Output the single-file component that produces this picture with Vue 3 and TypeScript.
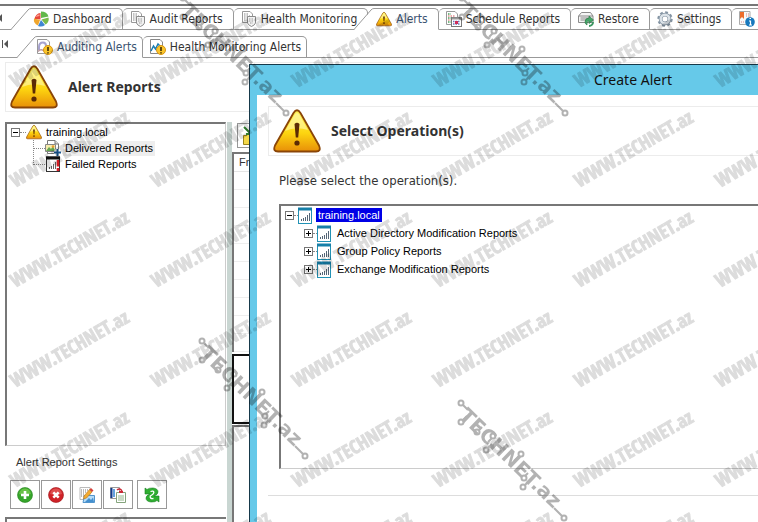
<script setup lang="ts">
interface Tab {
  label: string
  icon: string
  active?: boolean
}

interface TreeItem {
  label: string
  icon: string
  selected?: boolean
}

interface Point {
  x: number
  y: number
}

const mainTabs: Tab[] = [
  { label: 'Dashboard', icon: 'pie' },
  { label: 'Audit Reports', icon: 'audit' },
  { label: 'Health Monitoring', icon: 'audit' },
  { label: 'Alerts', icon: 'warning', active: true },
  { label: 'Schedule Reports', icon: 'schedule' },
  { label: 'Restore', icon: 'restore' },
  { label: 'Settings', icon: 'gear' },
  { label: '', icon: 'about' },
]

const subTabs: Tab[] = [
  { label: 'Auditing Alerts', icon: 'audit-alert', active: true },
  { label: 'Health Monitoring Alerts', icon: 'health-alert' },
]

const reports: TreeItem[] = [
  { label: 'Delivered Reports', icon: 'delivered', selected: true },
  { label: 'Failed Reports', icon: 'failed' },
]

const operations: string[] = [
  'Active Directory Modification Reports',
  'Group Policy Reports',
  'Exchange Modification Reports',
]

const actions: Tab[] = [
  { label: 'Add', icon: 'add' },
  { label: 'Delete', icon: 'delete' },
  { label: 'Edit', icon: 'edit' },
  { label: 'Copy', icon: 'copy' },
  { label: 'Refresh', icon: 'refresh' },
]

const stamps: Point[] = []
for (let row = 0; row < 6; row++) {
  for (let col = 0; col < 6; col++) {
    stamps.push({ x: 15 + col * 141, y: 88 + row * 100 })
  }
}

const logos: Point[] = [
  { x: 182, y: -3 },
  { x: 461, y: -3 },
  { x: 201, y: 340 },
  { x: 460, y: 402 },
]

const nodes: Point[] = [
  { x: 1, y: 1 },
  { x: 1, y: 20 },
  { x: 17, y: 30 },
  { x: 33, y: 34 },
  { x: 26, y: 48 },
  { x: 61, y: 52 },
  { x: 64, y: 76 },
  { x: 63, y: 85 },
  { x: 104, y: 116 },
]
</script>

<template>
  <svg class="sprite" aria-hidden="true">
    <defs>
      <linearGradient id="gold" x1="0" y1="0" x2="0" y2="1">
        <stop offset="0" stop-color="#fff35a" />
        <stop offset="0.55" stop-color="#fdd510" />
        <stop offset="1" stop-color="#e88f08" />
      </linearGradient>
      <symbol id="warning" viewBox="0 0 48 44">
        <path d="M20.500 4Q24 -1.500 27.500 4L46 36.500Q48.500 42.500 43 42.500H5Q-.5 42.500 2 36.500Z" fill="url(#gold)" stroke="#8a4507" stroke-width="1.800" />
        <path d="M21.500 6Q24 2 26.500 6L35 21Q23 17 12 22Z" fill="#fffbc0" opacity=".55" />
        <path d="M21.500 15Q24 12.500 26.500 15L25.200 28.500H22.800Z" fill="#5b2b05" />
        <circle cx="24" cy="34" r="2.600" fill="#5b2b05" />
      </symbol>
      <symbol id="pie" viewBox="0 0 16 16">
        <path d="M7.500 8.500V2A6.500 6.500 0 0 0 1.500 8Z" fill="#e5473a" />
        <path d="M7 9L1 7.500Q0 12 5 14.500Z" fill="#f0a62d" />
        <path d="M8 7V.5Q14 .5 15.500 5.500Z" fill="#63b84b" />
        <path d="M8.500 8.500L15.500 6.500Q16.500 11 12.500 13.500Z" fill="#7abb4b" />
        <path d="M8 9L12 14Q9 16.500 5 15Z" fill="#3f86d2" />
        <path d="M2.500 6Q4 3.500 6.500 3.200V5Z" fill="#ff9d90" />
      </symbol>
      <symbol id="audit" viewBox="0 0 16 16">
        <path d="M1.500 .5H9L11.500 3V11.500H1.500Z" fill="#fff" stroke="#999" />
        <path d="M3 3H8M3 5H9M3 7H9M3 9H9" stroke="#888" stroke-dasharray="1.500 1" />
        <path d="M6.500 5.500H14.500V12Q14 14 10.500 15.500Q7 14 6.500 12Z" fill="#f2f2f2" stroke="#8b8b8b" />
        <path d="M8 8H13M8 10H13M9 12H12" stroke="#999" stroke-dasharray="1.500 1" />
      </symbol>
      <symbol id="schedule" viewBox="0 0 16 16">
        <path d="M.5 .5H9L11.500 3V13.500H.5Z" fill="#fff" stroke="#999" />
        <path d="M2 3H5M2 7H5M2 11H5" stroke="#49a35c" stroke-width="1.500" stroke-dasharray="1.500 1" />
        <path d="M2 5H9M2 9H5" stroke="#d35454" stroke-dasharray="1.500 1" />
        <rect x="5.500" y="6.500" width="10" height="9" fill="#fff" stroke="#777" />
        <path d="M6 7.500H15" stroke="#999" stroke-width="2" />
        <path d="M7 10.500H14M7 13H14" stroke="#6475b8" stroke-width="1.500" stroke-dasharray="1.500 1" />
        <rect x="9" y="10" width="3" height="3" fill="#d02b58" />
      </symbol>
      <symbol id="restore" viewBox="0 0 16 16">
        <path d="M3.500 1.500H12.500L15 5V11.500H.5V5Z" fill="#f5f5f5" stroke="#8b8b8b" />
        <path d="M1 5H15M2.500 7H12M2.500 9H8" stroke="#888" />
        <path d="M7 11A4 4 0 0 1 11 7V5L15.500 9L11 12.500V10Q8.500 10 9 14Q7 13 7 11Z" fill="#45a568" stroke="#25723f" stroke-width=".6" />
        <path d="M11 15A4 4 0 0 0 15 11" fill="none" stroke="#3b9660" stroke-width="2" />
      </symbol>
      <symbol id="gear" viewBox="0 0 16 16">
        <circle cx="8" cy="8" r="6.700" fill="none" stroke="#8494a3" stroke-width="2" stroke-dasharray="2.800 2.460" />
        <circle cx="8" cy="8" r="4.400" fill="none" stroke="#8494a3" stroke-width="3.800" />
        <circle cx="8" cy="8" r="4.300" fill="none" stroke="#dce3e9" stroke-width="2.400" />
        <circle cx="8" cy="8" r="2" fill="#fff" />
      </symbol>
      <symbol id="about" viewBox="0 0 16 16">
        <path d="M.5 .5H11V13.500H.5Z" fill="#f7f7f7" stroke="#aaa" />
        <path d="M1 1H5V8L3 6L1 8Z" fill="#ed6c2b" />
        <path d="M7 3H10M7 5H10M2 11H5" stroke="#d58a8a" stroke-dasharray="1 1" />
        <circle cx="11" cy="11" r="4.800" fill="#1878bd" />
        <path d="M10 10H11.500V14M10 14H13M10.500 7.500H12" fill="none" stroke="#fff" stroke-width="1.200" />
      </symbol>
      <symbol id="badge" viewBox="0 0 10 10">
        <circle cx="5" cy="5" r="4.500" fill="#f9c52c" stroke="#d99513" />
        <path d="M5 2V6M5 7.200V8.600" stroke="#332200" stroke-width="1.500" />
      </symbol>
      <symbol id="audit-alert" viewBox="0 0 16 16">
        <path d="M.5 .5H10L12.500 3V14.500H.5Z" fill="#fff" stroke="#999" />
        <path d="M2 11V8Q2 3.500 6 3.500Q9 3.500 9 7" fill="none" stroke="#a7a3cf" stroke-width="2" />
        <path d="M1 12.500Q4 9 8 12.500" fill="none" stroke="#bc9aa0" stroke-width="1.500" />
        <use href="#badge" x="6" y="6" width="10" height="10" />
      </symbol>
      <symbol id="health-alert" viewBox="0 0 16 16">
        <path d="M.5 .5H10L12.500 3V14.500H.5Z" fill="#fff" stroke="#888" />
        <path d="M1 12L3.500 7L5.500 10L8 5L10 7" fill="none" stroke="#197db2" stroke-width="1.500" />
        <use href="#badge" x="6" y="6" width="10" height="10" />
      </symbol>
      <symbol id="delivered" viewBox="0 0 16 16">
        <path d="M2.500 .5H10L13.500 4V13.500H2.500Z" fill="#fff" stroke="#777" />
        <path d="M10 .5V4H13.500" fill="#ddd" stroke="#777" />
        <path d="M.5 4.500H10.500V11.500H.5Z" fill="#f6ecab" stroke="#888" />
        <path d="M1 11L4 7L6 9L8 6L10 11Z" fill="#63a652" />
        <circle cx="8" cy="6.500" r="1.300" fill="#ea9b31" />
        <path d="M12.500 9V16M9 12.500H16" stroke="#fff" stroke-width="4" />
        <path d="M12.500 9V16M9 12.500H16" stroke="#18558e" stroke-width="2" />
      </symbol>
      <symbol id="failed" viewBox="0 0 16 16">
        <rect x="1.500" y="1" width="13" height="14.500" fill="#fff" stroke="#333" />
        <path d="M1 2H15" stroke="#111" stroke-width="3" />
        <path d="M4.500 13V11M6.500 13V10M8.500 13V8M10.500 13V6" stroke="#666" />
        <path d="M13 4V10.500M13 12V15" stroke="#d51c24" stroke-width="2.600" />
      </symbol>
      <symbol id="chart" viewBox="0 0 14 17">
        <rect x=".5" y="1.500" width="13" height="15" fill="#fff" stroke="#2292b5" />
        <path d="M0 2H14" stroke="#167fa8" stroke-width="3" />
        <path d="M3.500 14V12M5.500 14V11M7.500 14V10M9.500 14V8M11.500 14V6" stroke="#567" stroke-width="1" />
      </symbol>
      <symbol id="add" viewBox="0 0 16 16">
        <circle cx="8" cy="8" r="7.500" fill="#36a52b" stroke="#24831d" stroke-width=".6" />
        <path d="M2 7Q3 1.500 8 1.500T14 7Q8 9 2 7Z" fill="#8bd35a" opacity=".6" />
        <path d="M8 4V12M4 8H12" stroke="#fff" stroke-width="2.600" />
      </symbol>
      <symbol id="delete" viewBox="0 0 16 16">
        <circle cx="8" cy="8" r="7.500" fill="#cf2228" stroke="#9e1318" stroke-width=".6" />
        <path d="M2 7Q3 1.500 8 1.500T14 7Q8 9 2 7Z" fill="#ee7a75" opacity=".5" />
        <path d="M5.300 5.300L10.700 10.700M10.700 5.300L5.300 10.700" stroke="#fff" stroke-width="2.600" />
      </symbol>
      <symbol id="edit" viewBox="0 0 16 16">
        <path d="M1 .5H11V12.500H1Z" fill="#fff" stroke="#bbb" />
        <path d="M2 3H9M2 5H8M2 7H6M2 9H5" stroke="#777" stroke-dasharray="1 1" />
        <path d="M5.500 8.500H15.500V15.500H4Z" fill="#b5dcf7" stroke="#5295cc" />
        <path d="M6 15L10 11L12 13L14 10.500L15 15Z" fill="#438fcf" />
        <path d="M5 9L10.500 2.500L13 5L7.500 11L4.500 12Z" fill="#f2ab31" stroke="#ba7016" stroke-width=".6" />
        <path d="M10.500 2.500L12 1L14.500 3.500L13 5Z" fill="#d6403a" />
      </symbol>
      <symbol id="copy" viewBox="0 0 16 16">
        <path d="M.5 .5H9.500V11.500H.5Z" fill="#fff" stroke="#999" />
        <path d="M1.500 1V11" stroke="#123a8a" stroke-width="2" />
        <path d="M4 2V10" stroke="#62a2e0" stroke-width="2" />
        <path d="M6.500 5.500H15.500V15.500H6.500Z" fill="#fff" stroke="#85a47c" />
        <path d="M8 9H14M8 11H14M8 13H14" stroke="#93b78b" />
        <path d="M7 3Q10 .5 12 4" fill="none" stroke="#c92b37" stroke-width="1.500" />
        <path d="M9 4H13V6H9Z" fill="#c92b37" />
      </symbol>
      <symbol id="refresh" viewBox="0 0 16 16">
        <path d="M1 1L3 2.500Q5 .8 9 1Q14 1.500 14 5Q14 7.500 10 9H15V15L13 13.500Q11 15.200 7 15Q2 14.500 2 11Q2 8.500 6 7H1Z" fill="#2fae31" stroke="#168020" stroke-width=".6" />
        <path d="M6.500 4.500Q9.500 3.500 9.800 5.200T6.300 9Q5.500 12 9.500 11.500" fill="none" stroke="#fff" stroke-width="1.300" />
      </symbol>
      <symbol id="export" viewBox="0 0 18 20">
        <path d="M1.500 9.500H5L7 7.500H17V18.500H1.500Z" fill="#f4d849" stroke="#9a851c" />
        <path d="M2 1L9 8M9 3V8H4" fill="none" stroke="#2f7d2c" stroke-width="2" />
      </symbol>
    </defs>
  </svg>

  <div class="window">
    <main class="app">
      <nav class="strip main-strip" aria-label="Sections">
        <svg class="first" viewBox="0 0 10 10" aria-hidden="true"><path d="M2 5L6 1V9Z" fill="#555" /></svg>
        <template v-for="(tab, i) in mainTabs" :key="i">
          <svg v-if="i === 0 || tab.active" class="slant" :class="{ inner: i > 0 }" viewBox="0 0 20 22" aria-hidden="true">
            <path class="cut" d="M0 22L18 1.500L20 .5V22Z" />
            <path class="edge" d="M0 21.500L17 2Q18 .5 20 .5" />
          </svg>
          <button type="button" class="tab" :class="{ active: tab.active, led: i > 0 && !tab.active }" :aria-label="tab.label || 'About'">
            <svg class="icon"><use :href="'#' + tab.icon" /></svg>
            <span>{{ tab.label }}</span>
          </button>
        </template>
      </nav>

      <nav class="strip sub-strip" aria-label="Alert sections">
        <svg class="first" viewBox="0 0 10 10" aria-hidden="true"><path d="M2.500 1V9" stroke="#555" /><path d="M4 5L8 1V9Z" fill="#555" /></svg>
        <template v-for="(tab, i) in subTabs" :key="tab.label">
          <svg v-if="tab.active" class="slant" viewBox="0 0 20 22" aria-hidden="true">
            <path class="cut" d="M0 22L18 1.500L20 .5V22Z" />
            <path class="edge" d="M0 21.500L17 2Q18 .5 20 .5" />
          </svg>
          <button type="button" class="tab" :class="{ active: tab.active, led: i > 0 }">
            <svg class="icon"><use :href="'#' + tab.icon" /></svg>
            <span>{{ tab.label }}</span>
          </button>
        </template>
      </nav>

      <header class="banner">
        <svg class="big-icon"><use href="#warning" /></svg>
        <h1>Alert Reports</h1>
      </header>

      <div class="body">
        <aside class="side">
          <div class="tree report-tree">
            <div class="row">
              <span class="expander minus"></span>
              <span class="dots"></span>
              <svg class="icon"><use href="#warning" /></svg>
              <span class="name">training.local</span>
            </div>
            <div v-for="item in reports" :key="item.label" class="row child">
              <span class="branch"></span>
              <svg class="icon"><use :href="'#' + item.icon" /></svg>
              <span class="name" :class="{ selected: item.selected }">{{ item.label }}</span>
            </div>
          </div>
          <p class="caption">Alert Report Settings</p>
          <div class="actions">
            <button v-for="action in actions" :key="action.icon" type="button" :aria-label="action.label">
              <svg class="icon"><use :href="'#' + action.icon" /></svg>
            </button>
          </div>
          <div class="lower"></div>
        </aside>
        <div class="splitter"></div>
        <section class="list">
          <button type="button" class="export" aria-label="Export">
            <svg><use href="#export" /></svg>
          </button>
          <div class="grid">
            <div class="grid-head">From</div>
            <div v-for="n in 10" :key="n" class="grid-row"></div>
          </div>
          <div class="preview"></div>
          <div class="rest"></div>
        </section>
      </div>
    </main>

    <section class="dialog" role="dialog" aria-labelledby="dialog-title">
      <h2 id="dialog-title" class="title-bar">Create Alert</h2>
      <div class="dialog-body">
        <header class="dialog-banner">
          <svg class="big-icon"><use href="#warning" /></svg>
          <h3>Select Operation(s)</h3>
        </header>
        <p class="hint">Please select the operation(s).</p>
        <div class="tree operation-tree">
          <div class="row">
            <span class="expander minus"></span>
            <span class="dots"></span>
            <svg class="chart"><use href="#chart" /></svg>
            <span class="name chosen">training.local</span>
          </div>
          <div v-for="operation in operations" :key="operation" class="row child">
            <span class="expander"></span>
            <span class="dots"></span>
            <svg class="chart"><use href="#chart" /></svg>
            <span class="name">{{ operation }}</span>
          </div>
        </div>
        <footer class="dialog-footer"></footer>
      </div>
    </section>

    <svg class="watermark" aria-hidden="true">
      <g class="stamps">
        <text v-for="(s, i) in stamps" :key="i" :transform="`translate(${s.x} ${s.y}) rotate(-30)`">WWW.TECHNET.az</text>
      </g>
      <g v-for="(l, i) in logos" :key="i" :transform="`translate(${l.x} ${l.y})`" class="logo">
        <text transform="translate(-2 15) rotate(44)">TECHNET.az</text>
        <circle v-for="(n, k) in nodes" :key="k" :cx="n.x" :cy="n.y" r="2.500" />
        <path d="M3 3L8 8M3 18L7 14M19 28L22 25M32 36L28 40M28 46L32 42M59 54L54 59M65 74L68 71M65 83L69 79M102 114L94 106" />
      </g>
    </svg>
  </div>
</template>

<style>
body {
  margin: 0;
  background: #fff;
}
</style>

<style scoped>
.sprite {
  position: absolute;
  width: 0;
  height: 0;
}

.window {
  position: relative;
  height: 100vh;
  overflow: hidden;
  font-family: "Noto Sans", "Open Sans", sans-serif;
  color: #333;
}

button {
  font: inherit;
  color: inherit;
}

h1, h2, h3, p {
  margin: 0;
}

.app {
  display: flex;
  flex-direction: column;
  height: 100%;
}

.icon {
  flex: none;
  width: 16px;
  height: 16px;
}

.strip {
  display: flex;
  flex: none;
  align-items: flex-end;
  overflow: hidden;
  background: linear-gradient(#999, #999) bottom / 100% 1px no-repeat;
}

.main-strip {
  height: 24px;
  margin-top: 4px;
  border-top: 2px solid #777;
}

.sub-strip {
  height: 28px;
}

.first {
  flex: none;
  align-self: center;
  width: 10px;
  height: 10px;
}

.main-strip .first {
  margin-left: -4px;
  margin-right: 5px;
}

.sub-strip .first {
  margin-right: 7px;
}

.slant {
  position: relative;
  flex: none;
  width: 20px;
  height: 22px;
}

.slant.inner {
  margin-left: -14px;
}

.cut {
  fill: #fff;
}

.edge {
  fill: none;
  stroke: #999;
}

.tab {
  position: relative;
  display: flex;
  flex: none;
  align-items: center;
  gap: 4px;
  box-sizing: border-box;
  height: 22px;
  padding: 0 10px 1px 2px;
  border: solid #999;
  border-width: 1px 1px 1px 0;
  border-top-right-radius: 5px;
  background: #fff;
  font-family: "DejaVu Sans Condensed", "Noto Sans", sans-serif;
  font-size: 12px;
  line-height: 16px;
  white-space: nowrap;
}

.tab.active {
  border-bottom-color: #fff;
  color: #3c5573;
}

.tab.led {
  padding-left: 7px;
  border-top-left-radius: 5px;
}

.sub-strip .tab {
  padding-right: 5px;
}

.sub-strip .tab.active {
  padding-left: 0;
}

.banner {
  display: flex;
  flex: none;
  align-items: center;
  gap: 10px;
  box-sizing: border-box;
  height: 50px;
  margin: 4px 0 0 5px;
  padding-left: 4px;
  border: 1px solid #ececec;
}

.big-icon {
  flex: none;
  width: 48px;
  height: 44px;
}

h1, h3 {
  font-size: 14px;
  line-height: 20px;
  font-weight: 700;
}

.body {
  display: flex;
  flex: 1;
  min-height: 0;
  padding: 10px 0 0 5px;
}

.side {
  display: flex;
  flex: none;
  flex-direction: column;
  width: 222px;
}

.tree {
  box-sizing: border-box;
  border: solid #777;
  border-width: 2px 1px 1px 2px;
  border-right-color: #ccc;
  border-bottom-color: #ccc;
  background: #fff;
  color: #000;
}

.report-tree {
  flex: 1;
  margin-right: 1px;
  font-family: "Liberation Sans", sans-serif;
  font-size: 11px;
}

.row {
  display: flex;
  align-items: center;
}

.report-tree .row {
  height: 16px;
  padding-left: 4px;
}

.report-tree .row.child {
  padding-left: 26px;
}

.name {
  padding: 0 2px;
  line-height: 15px;
  white-space: nowrap;
}

.report-tree .name {
  margin-left: 2px;
}

.name.selected {
  background: #eee;
}

.expander {
  flex: none;
  box-sizing: border-box;
  width: 9px;
  height: 9px;
  border: 1px solid #777;
  background:
    linear-gradient(#000, #000) center / 5px 1px no-repeat,
    linear-gradient(#000, #000) center / 1px 5px no-repeat,
    #fff;
}

.expander.minus {
  background: linear-gradient(#000, #000) center / 5px 1px no-repeat, #fff;
}

.dots {
  flex: none;
  width: 6px;
  border-top: 1px dotted #888;
}

.branch {
  flex: none;
  align-self: flex-start;
  width: 11px;
  height: 8px;
  border: dotted #888;
  border-width: 0 0 1px 1px;
}

.child + .child .branch {
  height: 16px;
  margin-top: -8px;
}

.caption {
  flex: none;
  padding: 8px 0 10px 11px;
  font-family: "Liberation Sans", sans-serif;
  font-size: 11px;
  line-height: 16px;
}

.actions {
  display: flex;
  flex: none;
  gap: 1px;
  padding-left: 5px;
}

.actions button {
  display: grid;
  place-items: center;
  box-sizing: border-box;
  width: 30px;
  height: 29px;
  padding: 0;
  border: 1px solid #999;
  background: #fff;
}

.actions button:last-child {
  margin-left: 3px;
}

.lower {
  flex: none;
  height: 3px;
  margin: 8px 1px 0 0;
  border: solid #777;
  border-width: 2px 0 0 2px;
}

.splitter {
  flex: none;
  width: 5px;
  background: #c9d6d2;
}

.list {
  display: flex;
  flex: 1;
  flex-direction: column;
  min-width: 0;
}

.export {
  flex: none;
  align-self: flex-start;
  display: grid;
  place-items: center;
  box-sizing: border-box;
  width: 28px;
  height: 25px;
  margin: 1px 0 4px 5px;
  padding: 0;
  border: 1px solid #999;
  background: #fff;
}

.export svg {
  width: 18px;
  height: 20px;
}

.grid {
  flex: none;
  border: solid #777;
  border-width: 2px 0 0 2px;
  font-family: "Liberation Sans", sans-serif;
  font-size: 11px;
}

.grid-head {
  height: 17px;
  padding-left: 5px;
  border-bottom: 1px solid #e5e5e5;
  line-height: 17px;
}

.grid-row {
  height: 17px;
  border-bottom: 1px solid #eee;
}

.preview {
  flex: none;
  box-sizing: border-box;
  height: 70px;
  margin-top: 2px;
  border: 2px solid #111;
}

.rest {
  flex: 1;
  margin-top: 1px;
  border: solid #777;
  border-width: 2px 0 0 2px;
}

.dialog {
  position: absolute;
  top: 64px;
  left: 249px;
  display: flex;
  flex-direction: column;
  box-sizing: border-box;
  width: 768px;
  height: 100%;
  padding: 0 7px;
  border: 1px solid #16394a;
  background: #66c9e9;
}

.title-bar {
  flex: none;
  height: 30px;
  color: #111;
  font-size: 14px;
  font-weight: 400;
  line-height: 30px;
  text-align: center;
}

.dialog-body {
  flex: 1;
  padding: 11px 11px 0;
  background: #fff;
}

.dialog-banner {
  display: flex;
  align-items: center;
  gap: 10px;
  box-sizing: border-box;
  height: 50px;
  padding-left: 4px;
  border: 1px solid #ececec;
}

.hint {
  padding: 16px 0 14px 11px;
  font-family: "DejaVu Sans Condensed", "Noto Sans", sans-serif;
  font-size: 13px;
  line-height: 18px;
}

.operation-tree {
  height: 265px;
  margin-left: 11px;
  font-family: "Liberation Sans", sans-serif;
  font-size: 11px;
}

.operation-tree .row {
  height: 18px;
  padding-left: 4px;
}

.operation-tree .row.child {
  padding-left: 23px;
}

.operation-tree .dots {
  width: 4px;
}

.operation-tree .name {
  margin-left: 4px;
  line-height: 14px;
}

.operation-tree .name.chosen {
  background: #0000e6;
  color: #fff;
}

.chart {
  flex: none;
  width: 14px;
  height: 17px;
}

.dialog-footer {
  height: 30px;
  margin-top: 26px;
  border-top: 1px solid #ddd;
}

.watermark {
  position: absolute;
  inset: 0;
  width: 100%;
  height: 100%;
  pointer-events: none;
}

.stamps {
  opacity: 0.14;
}

.stamps text {
  fill: #000;
  stroke: #000;
  stroke-width: 1;
  font-family: "Open Sans Condensed", "Roboto Condensed", sans-serif;
  font-size: 19px;
  font-weight: 700;
}

.logo {
  opacity: 0.32;
}

.logo text {
  fill: #111;
  font-family: "DejaVu Sans", sans-serif;
  font-size: 20px;
  font-weight: 700;
}

.logo circle,
.logo path {
  fill: none;
  stroke: #111;
  stroke-width: 2;
}
</style>
